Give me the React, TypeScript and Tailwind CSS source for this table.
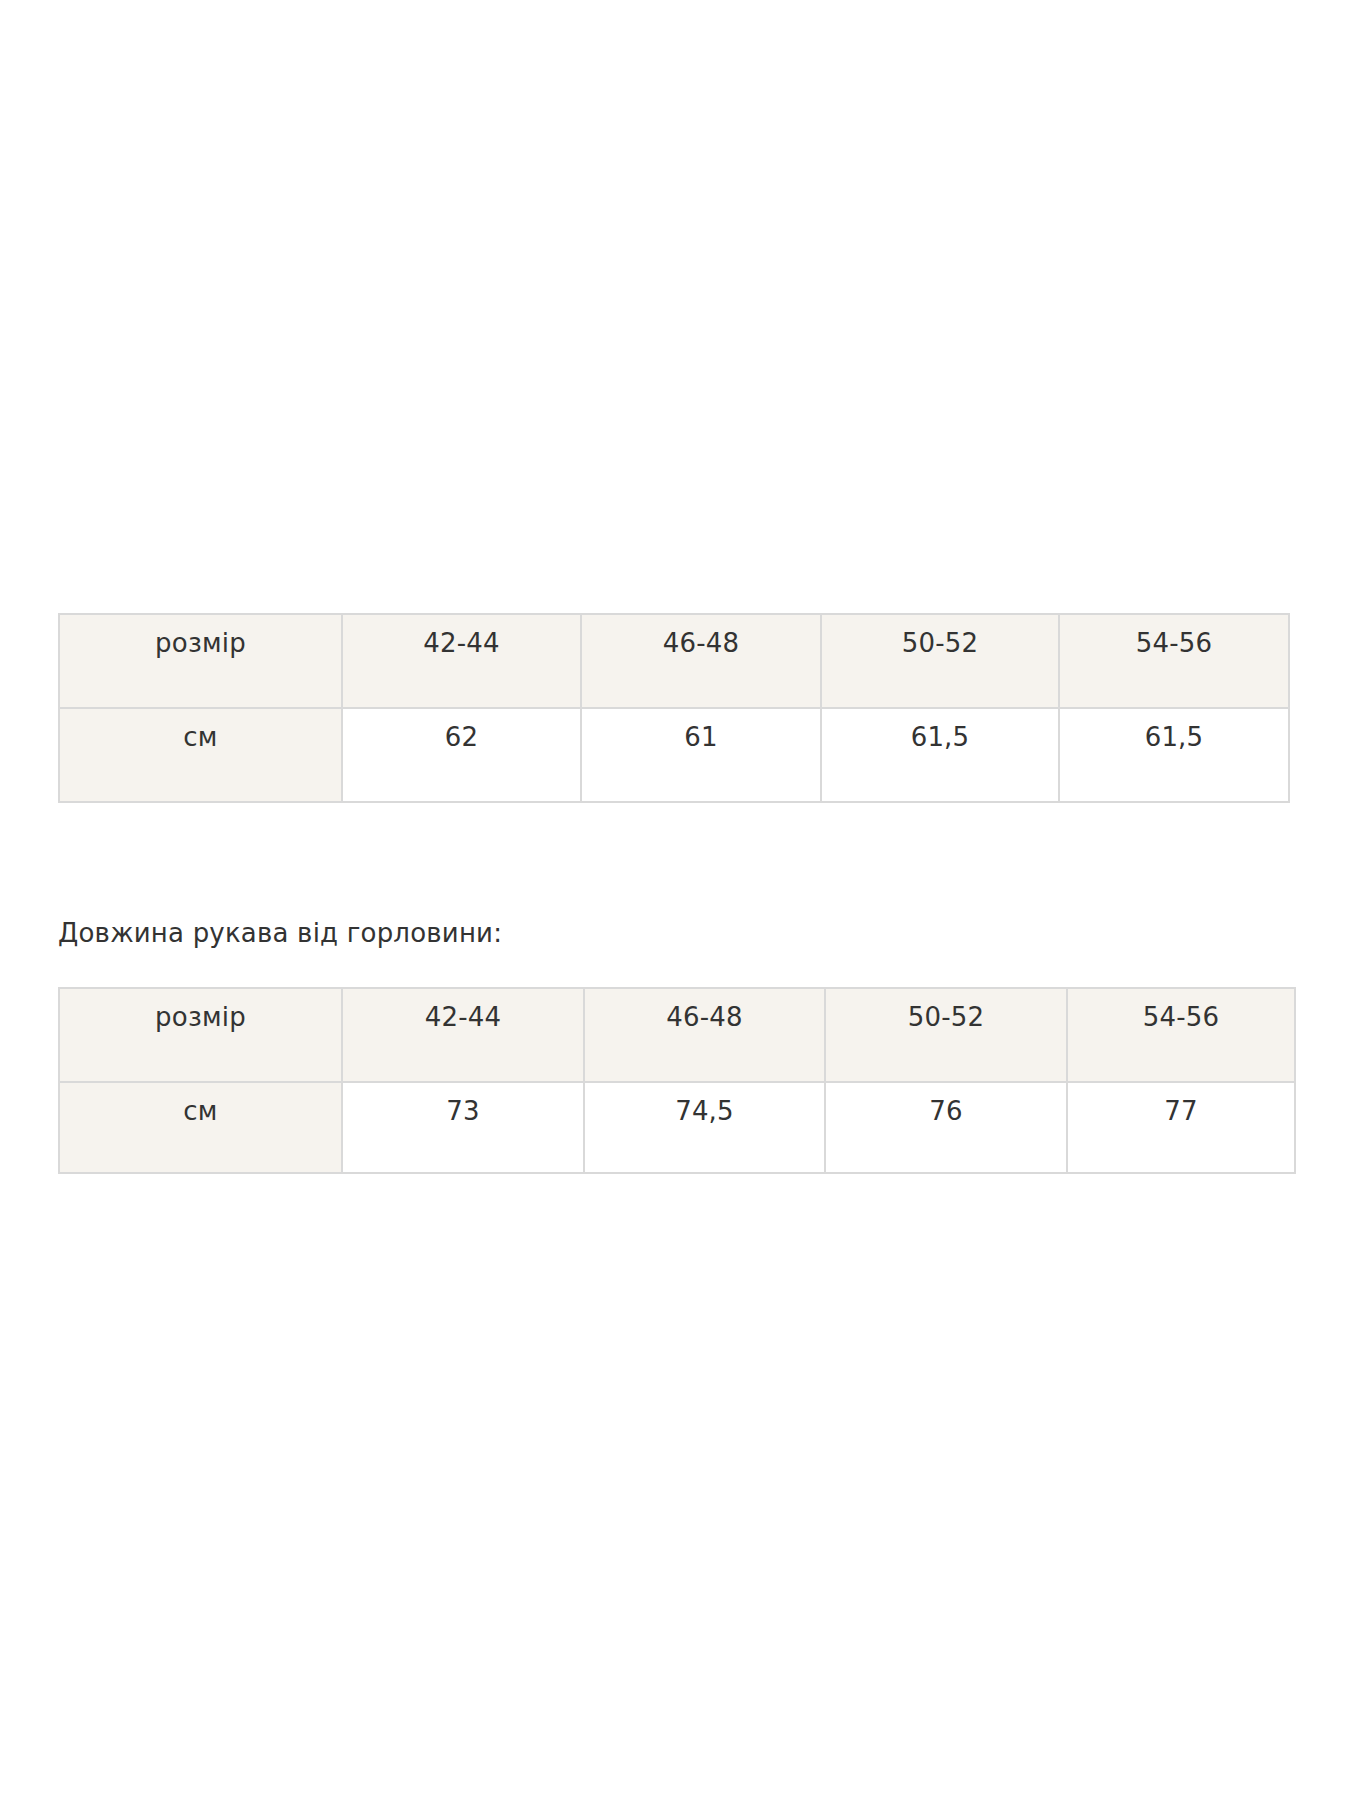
import React from 'react';

type SizeTableProps = {
    cols: string;
    width: string;
    lastRow: string;
    headers: string[];
    values: string[];
};

function SizeTable({ cols, width, lastRow, headers, values }: SizeTableProps) {
    const cell = 'border-r-2 border-b-2 border-[#d9d9d9] pt-[13px] text-center leading-[30px]';
    return (
        <div className={`grid ${cols} ${width} border-t-2 border-l-2 border-[#d9d9d9]`}>
            <div className={`${cell} h-[94px] bg-[#f6f3ee]`}>розмір</div>
            {headers.map((h) => (
                <div key={h} className={`${cell} h-[94px] bg-[#f6f3ee]`}>{h}</div>
            ))}
            <div className={`${cell} ${lastRow} bg-[#f6f3ee]`}>см</div>
            {values.map((v, i) => (
                <div key={i} className={`${cell} ${lastRow} bg-white`}>{v}</div>
            ))}
        </div>
    );
}

export default function App() {
    const sizes = ['42-44', '46-48', '50-52', '54-56'];

    return (
        <div className="min-h-[1800px] bg-white pl-[58px] pt-[613px] text-[26px] tracking-[0.2px] text-[#333333] font-['DejaVu_Sans','Noto_Sans',sans-serif]">
            <SizeTable
                cols="grid-cols-[283px_239px_240px_238px_230px]"
                width="w-[1232px]"
                lastRow="h-[94px]"
                headers={sizes}
                values={['62', '61', '61,5', '61,5']}
            />

            <p className="mt-[114px] mb-[38px] leading-[32px]">Довжина рукава від горловини:</p>

            <SizeTable
                cols="grid-cols-[283px_242px_241px_242px_228px]"
                width="w-[1238px]"
                lastRow="h-[91px]"
                headers={sizes}
                values={['73', '74,5', '76', '77']}
            />
        </div>
    );
}
